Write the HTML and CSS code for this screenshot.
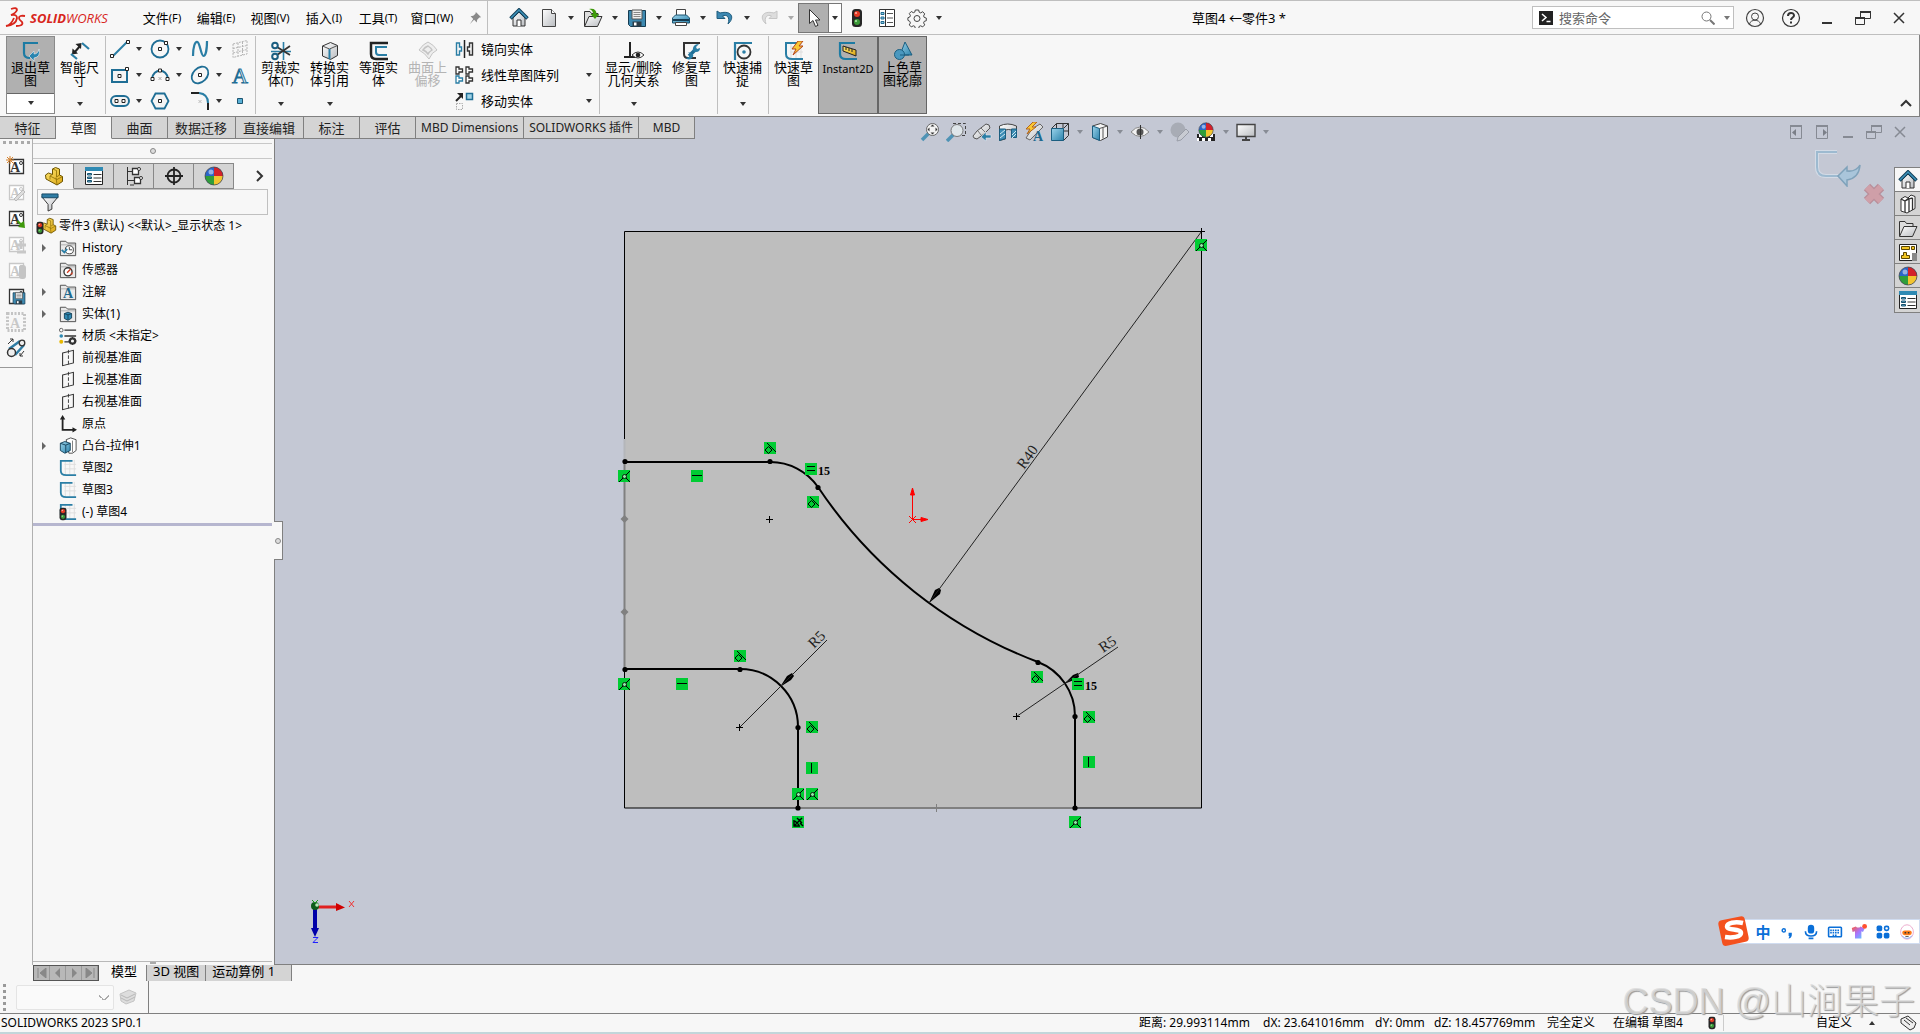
FILE: index.html
```html
<!DOCTYPE html>
<html lang="zh-CN">
<head>
    <meta charset="UTF-8">
    <meta name="viewport" content="width=device-width, initial-scale=1.0">
    <title>草图4 ←零件3 *</title>
    <link rel="stylesheet" href="styles.css">
</head>
<body>

<!-- shared icons -->
<svg class="sprite" width="0" height="0" aria-hidden="true">
    <defs>
        <linearGradient id="steel" x1="0" y1="0" x2="1" y2="1"><stop offset="0" stop-color="#fff"/><stop offset="1" stop-color="#b9bcc0"/></linearGradient>
        <linearGradient id="aqua" x1="0" y1="0" x2="1" y2="1"><stop offset="0" stop-color="#9bd3ea"/><stop offset="1" stop-color="#2c83ac"/></linearGradient>
        <linearGradient id="gold" x1="0" y1="0" x2="1" y2="1"><stop offset="0" stop-color="#ffe873"/><stop offset="1" stop-color="#dba512"/></linearGradient>
        <linearGradient id="shirt" x1="0" y1="0" x2="1" y2="1"><stop offset="0" stop-color="#ff5a3c"/><stop offset=".5" stop-color="#a974ff"/><stop offset="1" stop-color="#4fd4ff"/></linearGradient>
    </defs>
    <symbol id="i-home" viewBox="0 0 20 20">
        <path d="M4 10v8h12v-8l-6-6z" fill="url(#steel)" stroke="#333"/>
        <path d="M8 18v-6h4v6" fill="#fff" stroke="#333"/>
        <path d="M1.500 10.500L10 2l8.500 8.500" fill="none" stroke="#123f58" stroke-width="3.500"/>
        <path d="M2 10L10 2l8 8" fill="none" stroke="#3d93bb" stroke-width="1.500"/>
    </symbol>
    <symbol id="i-new" viewBox="0 0 20 20">
        <path d="M3.500 1.500h9l4 4v13h-13z" fill="url(#steel)" stroke="#444"/><path d="M12.500 1.500v4h4" fill="#fff" stroke="#444"/>
    </symbol>
    <symbol id="i-folder" viewBox="0 0 20 20">
        <path d="M1.500 18V3.500H7l1.500 2H15v3" fill="#ddd" stroke="#333"/><path d="M1.500 18.500l4.500-10h13l-4.500 10z" fill="url(#steel)" stroke="#333"/>
    </symbol>
    <symbol id="i-open" viewBox="0 0 20 20">
        <use href="#i-folder"/><path d="M6 1c5-1 7.500 1 7.500 5H16l-4 5-4.500-5H10C10 3.500 9 2 6 1z" fill="#3f9a0c"/>
    </symbol>
    <symbol id="i-save" viewBox="0 0 20 20">
        <path d="M1.500 2.500h17v16h-15l-2-2z" fill="#3d89b0" stroke="#163c52"/><path d="M5 2h10v9H5z" fill="#f0f0f0" stroke="#555"/><path d="M6.500 4.500h7M6.500 6.500h7M6.500 8.500h7" stroke="#888"/><path d="M5.500 13.500h9v5h-9z" fill="#2c3d48"/><path d="M7 14.500h2.500v3H7z" fill="#fff"/>
    </symbol>
    <symbol id="i-print" viewBox="0 0 20 20">
        <path d="M5.500 8V1.500h9V8" fill="#fff" stroke="#444"/><path d="M1.500 10l3-3h11l3 3v5h-17z" fill="url(#aqua)" stroke="#1b536f"/><path d="M2 12h16" stroke="#163c52" stroke-width="2"/><path d="M4.500 14.500h11v3h-11z" fill="#fff" stroke="#444"/>
    </symbol>
    <symbol id="i-undo" viewBox="0 0 20 20">
        <path d="M2 3v7.500h8L7.500 8c4-2 8 1 5.500 8 7-6 4-14-8-11z" fill="#3c88b2" stroke="#1f5c7d"/>
    </symbol>
    <symbol id="i-redo" viewBox="0 0 20 20">
        <path d="M18 3v7.500h-8L12.500 8C8.500 6 4.500 9 7 16 0 10 3 2 15 5z" fill="#ddd" stroke="#c6c6c6"/>
    </symbol>
    <symbol id="i-cursor" viewBox="0 0 20 20">
        <path d="M5.500 1.500v14l3.500-3 2.500 6 2.500-1.200-2.500-5.300H16z" fill="#fff" stroke="#333"/>
    </symbol>
    <symbol id="i-light" viewBox="0 0 20 20">
        <rect x="5" y="1" width="10" height="18" rx="3.500" fill="#262626"/><circle cx="10" cy="6" r="3" fill="#e53a24"/><circle cx="10" cy="14" r="3" fill="#3b9a38"/><circle cx="9" cy="5" r="1" fill="#ffb5a8"/><circle cx="9" cy="13" r="1" fill="#b8eab0"/>
    </symbol>
    <symbol id="i-list" viewBox="0 0 20 20">
        <path d="M2.500 1.500h15v17h-15z" fill="#fff" stroke="#333"/><path d="M8.500 2v16" stroke="#333"/><path d="M4 4.500h3v2H4zM4 9h3v2H4zM4 13.500h3v2H4z" fill="#8ac4de" stroke="#1f6b91"/><path d="M10 5.500h6M10 10h6M10 14.500h6" stroke="#555"/>
    </symbol>
    <symbol id="i-gear" viewBox="0 0 20 20">
        <path d="M8.300 2h3.400l.5 2.200 1.500.7 2-1.200 2 2.200-1.100 2 .6 1.500 2.100.7v2.600l-2.100.7-.6 1.500 1.100 2-2 2-2-1.100-1.500.6-.5 2.200H8.300l-.5-2.200-1.500-.6-2 1.100-2-2 1.100-2-.6-1.500L.9 12.300V9.700L2.800 9l.6-1.500-1.100-2 2-2 2 1.200 1.500-.6z" fill="none" stroke="#444"/><circle cx="10" cy="10.500" r="3" fill="none" stroke="#444"/>
    </symbol>
    <symbol id="i-pin" viewBox="0 0 16 16"><path d="M9 1l6 6-2 .5-2.500 2.500-.5 3-3-3-5 5 4-6-3-3 3-.5L8.500 3z" fill="#8a8a8a"/></symbol>
    <symbol id="i-user" viewBox="0 0 20 20" fill="none" stroke="#444"><circle cx="10" cy="10" r="8.500" stroke-width="1.200"/><circle cx="10" cy="8.500" r="3.500"/><path d="M4.500 16c1-5 10-5 11 0"/></symbol>
    <symbol id="i-help" viewBox="0 0 20 20" fill="none" stroke="#333"><circle cx="10" cy="10" r="8.500" stroke-width="1.200"/><path d="M7 8c0-4 6-4 6-.5 0 2-3 2-3 4.500M10 13.500v2" stroke-width="2"/></symbol>
    <symbol id="i-min" viewBox="0 0 20 20"><path d="M5 15h10" stroke="currentColor" stroke-width="2"/></symbol>
    <symbol id="i-restore" viewBox="0 0 20 20" fill="none" stroke="currentColor"><path d="M2.500 9.500h9v7h-9zM7.500 9V3.500h10v7H12"/><path d="M2 10h10M7 4h11" stroke-width="2"/></symbol>
    <symbol id="i-close" viewBox="0 0 20 20"><path d="M5 5l10 10M15 5L5 15" stroke="currentColor" stroke-width="1.500"/></symbol>

    <symbol id="i-exit" viewBox="0 0 20 20"><path d="M17 2H3v10q0 5 6 5" fill="none" stroke="#1d7ba3" stroke-width="2.200"/><path d="M8 15l5-5v3q4 0 5-5 2 8-5 9v3z" fill="#2885b0" stroke="#e8eef2" stroke-width=".6"/></symbol>
    <symbol id="i-dim" viewBox="0 0 20 20"><path d="M4 12l6-7" stroke="#222" stroke-width="2"/><path d="M2.500 7.500l-.5 6 6-1zM5.500 3l6-1-.5 6z" fill="#222"/><path d="M1 13l6 5M12 2l7 6" stroke="#2a7ea5" stroke-width="2.200"/></symbol>
    <symbol id="i-line" viewBox="0 0 20 20"><path d="M3 17L17 3" stroke="#2a7ea5" stroke-width="2"/><path d="M.5 15.500h3v3h-3zM16.500 1.500h3v3h-3z" fill="#fff" stroke="#222"/></symbol>
    <symbol id="i-rect" viewBox="0 0 20 20"><path d="M2 5h15v12H2z" fill="#f4f4f4" stroke="#1f6e95" stroke-width="2"/><path d="M8 9.500h3v3H8zM15.500 2.500h3v3h-3z" fill="#fff" stroke="#222"/></symbol>
    <symbol id="i-slot" viewBox="0 0 20 20"><rect x="1" y="5" width="18" height="10" rx="5" fill="#f4f4f4" stroke="#1f6e95" stroke-width="2"/><path d="M5 8.500h3v3H5zM12 8.500h3v3h-3z" fill="#fff" stroke="#222"/></symbol>
    <symbol id="i-circle" viewBox="0 0 20 20"><circle cx="10" cy="10" r="8.500" fill="#f7f7f7" stroke="#1f6e95" stroke-width="1.800"/><path d="M8.500 8.500h3v3h-3zM14.500 2.500h3v3h-3z" fill="#fff" stroke="#222"/></symbol>
    <symbol id="i-arc" viewBox="0 0 20 20"><path d="M2 14C3 3 17 3 18 14" fill="none" stroke="#1f6e95" stroke-width="2"/><path d="M1 12.500h3v3H1zM16 12.500h3v3h-3zM8.500 4h3v3h-3z" fill="#fff" stroke="#222"/><path d="M8.500 12l3 3M11.500 12l-3 3" stroke="#aaa"/></symbol>
    <symbol id="i-poly" viewBox="0 0 20 20"><path d="M5.500 2.500h9l4 7.500-4 7.500h-9L1.500 10z" fill="#f4f4f4" stroke="#1f6e95" stroke-width="1.800"/><path d="M8.500 8.500h3v3h-3z" fill="#fff" stroke="#222"/></symbol>
    <symbol id="i-spline" viewBox="0 0 20 20"><path d="M3 17C3 8 5 2 7.500 3S11 17 13.500 17 17 8 17 2" fill="none" stroke="#2a7ea5" stroke-width="2.200"/></symbol>
    <symbol id="i-ellipse" viewBox="0 0 20 20"><ellipse cx="10" cy="10" rx="9.500" ry="7" transform="rotate(-45 10 10)" fill="#f7f7f7" stroke="#1f6e95" stroke-width="1.800"/><path d="M8.500 8.500h3v3h-3z" fill="#fff" stroke="#222"/></symbol>
    <symbol id="i-fillet" viewBox="0 0 20 20" fill="none"><path d="M1 2h8M18 12v7" stroke="#222" stroke-width="2"/><path d="M9 2q9 1 9 10" stroke="#2a7ea5" stroke-width="2"/><path d="M8.500 9l3 3M11.500 9l-3 3" stroke="#bbb"/></symbol>
    <symbol id="i-plane3" viewBox="0 0 20 20"><path d="M3 5l14-3.500V15L3 18.500zM3 9.500l14-3M3 14l14-3.500M8 4v13M12.500 3v13" fill="none" stroke="#b4b4b4" stroke-dasharray="2 1"/></symbol>
    <symbol id="i-point" viewBox="0 0 20 20"><path d="M7.500 7.500h5v5h-5z" fill="#58b0d6" stroke="#1d5470"/></symbol>
    <symbol id="i-trim" viewBox="0 0 20 20"><path d="M0 10.500h20M12.500 1v18" stroke="#2a7ea5" stroke-width="1.600"/><path d="M6 6l13 8M6 14l13-9" stroke="#333" stroke-width="1.800"/><circle cx="4" cy="4.500" r="2.800" fill="none" stroke="#1b5e80" stroke-width="2"/><circle cx="4" cy="15.500" r="2.800" fill="none" stroke="#1b5e80" stroke-width="2"/></symbol>
    <symbol id="i-cube" viewBox="0 0 20 20"><path d="M2.500 5l8-3.500 7 3v10l-7 4-8-3.500z" fill="url(#steel)" stroke="#333"/><path d="M2.500 5l7 3 8-3.500" fill="none" stroke="#555"/><path d="M9.500 8v10" stroke="#2a7ea5" stroke-width="2"/></symbol>
    <symbol id="i-offset" viewBox="0 0 20 20" fill="none"><path d="M19 2H2v11q0 5 5 5h12" stroke="#222" stroke-width="2.500"/><path d="M18 6H7v5q0 3 3 3h8" stroke="#2a7ea5" stroke-width="2"/></symbol>
    <symbol id="i-surf" viewBox="0 0 20 20"><path d="M1 9Q5 3 10 1q6 3 9 8-5 2-8 9-4-6-10-9z" fill="#eee" stroke="#c4c4c4"/><path d="M5 9q2-3 5-4 3 2 4 4-3 2-4 4-2-3-5-4z" fill="none" stroke="#c4c4c4" stroke-width="1.500"/></symbol>
    <symbol id="i-mirror" viewBox="0 0 20 20" fill="none"><path d="M10.500 1v18" stroke="#222" stroke-width="1.500"/><path d="M2.500 4v12h3v-4h2V8h-2V4z" stroke="#2a7ea5" stroke-width="1.400"/><path d="M18.500 4v12h-3v-4h-2V8h2V4z" stroke="#333" stroke-width="1.400"/></symbol>
    <symbol id="i-pattern" viewBox="0 0 20 20" fill="#fff" stroke="#333" stroke-width="1.300"><path d="M2 2v7h3V7h3.500V4H5V2zM12 2v7h3V7h3.500V4H15V2zM12 11v7h3v-2h3.500v-3H15v-2z"/><path d="M2 11v7h3v-2h3.500v-3H5v-2z" stroke="#2a7ea5"/></symbol>
    <symbol id="i-move" viewBox="0 0 20 20"><path d="M12.500 2.500h6v6h-6z" fill="#9fd2e6" stroke="#1f6e95" stroke-width="1.500"/><path d="M2 10l6-6" stroke="#222" stroke-width="2"/><path d="M3 2h6v6z" fill="#222"/><path d="M2.500 12.500h6v6h-6z" fill="none" stroke="#aaa" stroke-dasharray="1.500 1"/></symbol>
    <symbol id="i-rel" viewBox="0 0 20 20"><path d="M6 1v15M0 16h11" stroke="#222" stroke-width="2"/><path d="M8 14q6-6 12 0-6 6-12 0z" fill="#fff" stroke="#333"/><circle cx="14" cy="14" r="2.300" fill="#222"/></symbol>
    <symbol id="i-repair" viewBox="0 0 20 20"><path d="M18 2H2v11q0 4 4 4h8" fill="none" stroke="#333" stroke-width="2"/><path d="M7 15l7-7" stroke="#1f6e95" stroke-width="3.500"/><path d="M17 3l-3 3 1 2 3-1q0 4-4 4-4 0-3-4t6-4zM6 11l2 2-1 3-3 1q3 3 6 0t-1-5z" fill="#2a7ea5"/></symbol>
    <symbol id="i-snap" viewBox="0 0 20 20" fill="none"><path d="M2 19V2h17" stroke="#2a7ea5" stroke-width="2.200"/><circle cx="11" cy="11" r="6.500" stroke="#333" stroke-width="1.800"/><circle cx="11" cy="11" r="1.800" fill="#2a7ea5"/></symbol>
    <symbol id="i-sketch" viewBox="0 0 20 20" fill="none"><path d="M6 6h13M6 11h13M7 1v16M12 1v16M17 1v16" stroke="#ddd"/><path d="M15 2H2v11q0 5 6 5h11" stroke="#2a7ea5" stroke-width="2"/></symbol>
    <symbol id="i-rapid" viewBox="0 0 20 20"><use href="#i-sketch"/><path d="M14 0L8 8h4l-3 6 10-9h-4l4-5z" fill="#f9c834" stroke="#b5441b"/></symbol>
    <symbol id="i-instant" viewBox="0 0 20 20"><path d="M17 2H2v11q0 5 6 5h11" fill="none" stroke="#1d7ba3" stroke-width="2.200"/><path d="M5 5l13 4v6L5 10z" fill="url(#gold)" stroke="#222"/><path d="M8 6v3M11 7v3M14 8v3" stroke="#222"/></symbol>
    <symbol id="i-shade" viewBox="0 0 20 20"><path d="M12 1l7 13H7z" fill="url(#aqua)" stroke="#1b5e80"/><circle cx="6.500" cy="13.500" r="5" fill="#4a98bf" stroke="#1b5e80"/><path d="M7 14h9" stroke="#1b5e80"/></symbol>

    <symbol id="i-zoomfit" viewBox="0 0 20 20"><path d="M9 11l-7 7" stroke="#4f93b5" stroke-width="3.500"/><circle cx="12.500" cy="7.500" r="6" fill="#f2f2f2" stroke="#666"/><path d="M12.500 2.500l2 2h-4zM12.500 12.500l2-2h-4zM7.500 7.500l2-2v4zM17.500 7.500l-2-2v4z" fill="#333"/></symbol>
    <symbol id="i-zoomarea" viewBox="0 0 20 20"><path d="M7 1.500h12.500v12H15" fill="none" stroke="#444" stroke-dasharray="3 2"/><path d="M8 12l-7 7" stroke="#4f93b5" stroke-width="3.500"/><circle cx="11" cy="8.500" r="6" fill="#dfe6ea" stroke="#777"/></symbol>
    <symbol id="i-prev" viewBox="0 0 20 20"><path d="M1 14l4-5 9-7 3 1 1 3-6 6-7 5-3-1z" fill="url(#steel)" stroke="#555"/><path d="M6 9l3 4M9 6l4 4" stroke="#777"/><path d="M19 13h-5v-3l-5 5 5 4v-3h5z" fill="#2a7ea5" stroke="#e4e8ee" stroke-width=".6"/></symbol>
    <symbol id="i-section" viewBox="0 0 20 20"><path d="M1.500 4q8-4 17 0v11h-5V8q-3-1-6 0v9l-6 1.500z" fill="url(#steel)" stroke="#444"/><path d="M1.500 7h6v9.500l-6 2zM13.500 7h5v8.500h-5z" fill="#3c8cb4" stroke="#1b5e80"/><path d="M2 12l5-4M2 16l5-4M14 13l4-4M14 16l4-4" stroke="#cfe8f2"/></symbol>
    <symbol id="i-anno" viewBox="0 0 20 20"><path d="M2 16l6-9 8-5 3 3-7 7-6 6z" fill="url(#steel)" stroke="#666"/><path d="M9 0L2 7h4l-3 5 9-7H8l5-5z" fill="#f9c834" stroke="#b5651b"/></symbol>
    <symbol id="i-orient" viewBox="0 0 20 20"><path d="M1.500 6.500l5-5h12v12l-5 5M13.500 6.500l5-5M6.500 1.500v5M13 6V2M14 9h4" fill="none" stroke="#333"/><path d="M1.500 6.500h12v12h-12z" fill="url(#aqua)" stroke="#1b5e80"/></symbol>
    <symbol id="i-style" viewBox="0 0 20 20"><path d="M2.500 4l8-2.500 7 2.500v11l-7 3.500-8-3z" fill="#f4f4f4" stroke="#444"/><path d="M2.500 4l7 2.500v12l-7-3z" fill="url(#aqua)" stroke="#1b5e80"/><path d="M9.500 6.500l8-2.500M13 5.500v11" fill="none" stroke="#555"/></symbol>
    <symbol id="i-eye" viewBox="0 0 20 20"><path d="M1 10q9-10 18 0-9 9-18 0z" fill="#f2f2f2" stroke="#888"/><circle cx="10" cy="10" r="3.500" fill="#555"/><path d="M10.500 3v14" stroke="#333"/></symbol>
    <symbol id="i-ball" viewBox="0 0 20 20"><circle cx="10" cy="10" r="9" fill="#2b66c9"/><path d="M10 10V1a9 9 0 019 9z" fill="#d3222a"/><path d="M10 10h9a9 9 0 01-9 9z" fill="#f2c430"/><path d="M10 10v9a9 9 0 01-9-9z" fill="#2f9e3b"/><circle cx="7" cy="6" r="2.500" fill="#fff" opacity=".5"/><circle cx="10" cy="10" r="9" fill="none" stroke="#444" stroke-width=".7"/></symbol>
    <symbol id="i-grayball" viewBox="0 0 20 20"><circle cx="8" cy="8" r="7.500" fill="#a8acb5"/><path d="M8 15l8-8 3 3-8 8-4 1z" fill="#c8cbd2" stroke="#9a9ea8"/></symbol>
    <symbol id="i-scene" viewBox="0 0 20 20"><path d="M1 12h18v7H1z" fill="#222"/><path d="M3 12h3v3H3zM14 12h3v3h-3zM6 16h3v3H6zM12 16h3v3h-3zM1 16h2v3H1z" fill="#fff"/><use href="#i-ball" x="2" y="0" width="16" height="16"/></symbol>
    <symbol id="i-screen" viewBox="0 0 20 20"><path d="M1 2.500h18v12H1z" fill="url(#steel)" stroke="#444" stroke-width="1.400"/><path d="M10 15v3M6 18h8" stroke="#444" stroke-width="2"/></symbol>
    <symbol id="i-paneL" viewBox="0 0 20 20"><path d="M4.500 4v12.500h11V4z" fill="none" stroke="#868a93"/><path d="M4 4h12" stroke="#868a93" stroke-width="2"/><path d="M10 7v7l-4-3.500z" fill="#7b7f88"/></symbol>
    <symbol id="i-paneR" viewBox="0 0 20 20"><path d="M4.500 4v12.500h11V4z" fill="none" stroke="#868a93"/><path d="M4 4h12" stroke="#868a93" stroke-width="2"/><path d="M11 7v7l4-3.500z" fill="#7b7f88"/></symbol>

    <symbol id="i-lib" viewBox="0 0 20 20"><path d="M3 5l4-2.500 3 1.500 3-3 4 1.500v12L9 19l-6-2z" fill="#fff" stroke="#333"/><path d="M7 7v11M11 5v13M14.500 4v12M3 5l4 2 4-3M7 7l5-2.500 2.500-.5" fill="none" stroke="#333" stroke-width="1.300"/></symbol>
    <symbol id="i-palette" viewBox="0 0 20 20"><path d="M1.500 2.500h17v16h-17z" fill="#fff" stroke="#222"/><path d="M3.500 4.500h8v3h-8zM13.500 4.500h3v3h-3zM5.500 10.500h3v3h3v3h-8v-3h2z" fill="#f3c623" stroke="#5d4700"/><path d="M14 11h5v8h-5z" fill="#888"/></symbol>
    <symbol id="i-props" viewBox="0 0 20 20"><path d="M1.500 1.500h17v17h-17z" fill="#fff" stroke="#222"/><path d="M1 1h18v4H1z" fill="#2f8ab3"/><path d="M3.500 7.500h4v1.500h-4zM3.500 11h4v1.500h-4zM3.500 14.500h4V16h-4z" fill="#78bbd8" stroke="#17516e"/><path d="M9.500 8.500h8M9.500 12h8M9.500 15.500h8" stroke="#333"/></symbol>
    <symbol id="i-part" viewBox="0 0 20 20"><path d="M1.500 9l3-2 4 1.500V3l3-1.500 4 1.500v6l3 1.500v5L13 19 2 13z" fill="url(#gold)" stroke="#6b5300"/><path d="M8.500 8.500L6 10v3.500M8.500 3l4 1.500V11l3-2M12 11.500l1 7M6 10l7 3.500 5.500-3" fill="none" stroke="#8d6e05" stroke-width=".8"/></symbol>
    <symbol id="i-config" viewBox="0 0 20 20" fill="#fff" stroke="#333"><path d="M3.500 1v18M3.500 5.500H8M3.500 14.500H10M6 19h4" fill="none"/><path d="M8.500 2.500h6v6h-6zM10.500 11.500h6v6h-6z" stroke-width="1.300"/><circle cx="15" cy="3" r="1.500"/><circle cx="17" cy="12" r="1.500"/></symbol>
    <symbol id="i-target" viewBox="0 0 20 20" fill="none" stroke="#222" stroke-width="1.800"><circle cx="10" cy="10" r="6.500"/><path d="M10 1v18M1 10h18"/></symbol>
    <symbol id="i-funnel" viewBox="0 0 20 20"><path d="M2 4l6.500 8v7l4-2v-5L19 4z" fill="url(#steel)" stroke="#333"/><path d="M2 1h17v4H2z" fill="#2f7da5" stroke="#174a65"/></symbol>
    <symbol id="i-fold" viewBox="0 0 20 20"><path d="M1.500 18.500V2.500h6l2 2h9v14z" fill="#e9e9e9" stroke="#444"/><path d="M2 6.500h16" stroke="#aaa"/></symbol>
    <symbol id="i-history" viewBox="0 0 20 20"><use href="#i-fold"/><circle cx="11.500" cy="12" r="4.500" fill="#fff" stroke="#333"/><path d="M11.500 9v3h3" fill="none" stroke="#333"/><path d="M3 12l3 3 3-4" fill="none" stroke="#2a7ea5" stroke-width="2"/></symbol>
    <symbol id="i-sensor" viewBox="0 0 20 20"><use href="#i-fold"/><circle cx="10" cy="12" r="4.500" fill="#fff" stroke="#333" stroke-width="1.500"/><path d="M9 13l4-4" stroke="#d33b1f" stroke-width="1.500"/><path d="M12 15l3-3v3z" fill="#d33b1f"/></symbol>
    <symbol id="i-body" viewBox="0 0 20 20"><use href="#i-fold"/><path d="M6 9.500L10 8l4 1.500v5L10 17l-4-2z" fill="#2f8ab3" stroke="#123f58"/><path d="M6 9.500l4 1.500 4-1.500M10 11v5.500" fill="none" stroke="#123f58"/></symbol>
    <symbol id="i-material" viewBox="0 0 20 20"><path d="M6 3.500h13M6 10h13M6 16.500h6" stroke="#333" stroke-width="1.600"/><circle cx="2.500" cy="3.500" r="2" fill="#fff" stroke="#555"/><circle cx="2.500" cy="10" r="2" fill="#2f8ab3"/><circle cx="2.500" cy="16.500" r="2.200" fill="#e8b800"/><circle cx="15" cy="15.500" r="3" fill="none" stroke="#333" stroke-width="2.500"/><path d="M15 11v9M10.500 15.500h9" stroke="#333" stroke-dasharray="1.500 6"/></symbol>
    <symbol id="i-plane" viewBox="0 0 20 20"><path d="M4 4.500l12-3v14l-12 3z" fill="none" stroke="#333" stroke-width="1.200"/><path d="M10.500 1v18" stroke="#333" stroke-dasharray="4 2"/></symbol>
    <symbol id="i-origin" viewBox="0 0 20 20"><path d="M4 3v13.500h14" fill="none" stroke="#222" stroke-width="2"/><path d="M4 0l3 5H1zM20 16.500l-5-3v6z" fill="#222"/></symbol>
    <symbol id="i-boss" viewBox="0 0 20 20"><path d="M8 3l5-2 6 2v12l-4 3h-4z" fill="#fff" stroke="#444"/><path d="M15 4v13" stroke="#777"/><path d="M1.500 7l5-2 6 2v8l-6 3-5-3z" fill="url(#aqua)" stroke="#123f58"/><path d="M1.500 7l6 2 5-2M7.500 9v9" fill="none" stroke="#123f58"/></symbol>
    <symbol id="i-frame" viewBox="0 0 20 20"><path d="M3.500 3.500h14v14h-14z" fill="#fff" stroke="currentColor" stroke-width="1.300"/><circle cx="15" cy="7" r="1.500" fill="none" stroke="currentColor"/></symbol>
    <symbol id="i-belt" viewBox="0 0 20 20"><path d="M3 11L14 3M9 17l9-10" stroke="#2f7da5" stroke-width="2.500"/><circle cx="5.500" cy="14.500" r="4" fill="#eee" stroke="#333" stroke-width="1.500"/><circle cx="16" cy="5" r="2.800" fill="#eee" stroke="#333" stroke-width="1.300"/><path d="M2 6l5-5M4 1h3v3M18 13l-4 5M14 15v3h3" fill="none" stroke="#333"/></symbol>
</svg>

<header class="titlebar">
    <div class="logo">
        <svg width="21" height="22" viewBox="0 0 21 22" fill="none" stroke="#d8261c" stroke-width="1.800"><path d="M6 2q6-2 6 1-1 3-6 5 6-1 6 3-1 7-11 8 5-1 8-8"/><path d="M20 9q-6-1-6 2 0 2 3 4 2 4-6 4"/></svg>
        <span class="brand"><b>SOLID</b>WORKS</span>
    </div>
    <nav class="menus">
        <button>文件<small>(F)</small></button>
        <button>编辑<small>(E)</small></button>
        <button>视图<small>(V)</small></button>
        <button>插入<small>(I)</small></button>
        <button>工具<small>(T)</small></button>
        <button>窗口<small>(W)</small></button>
    </nav>
    <button class="pin" aria-label="固定"><svg><use href="#i-pin"/></svg></button>
    <div class="quick">
        <button class="ico" aria-label="主页"><svg><use href="#i-home"/></svg></button>
        <button class="ico" aria-label="新建"><svg><use href="#i-new"/></svg></button><button class="caret" aria-label="新建选项"></button>
        <button class="ico" aria-label="打开"><svg><use href="#i-open"/></svg></button><button class="caret" aria-label="打开选项"></button>
        <button class="ico" aria-label="保存"><svg><use href="#i-save"/></svg></button><button class="caret" aria-label="保存选项"></button>
        <button class="ico" aria-label="打印"><svg><use href="#i-print"/></svg></button><button class="caret" aria-label="打印选项"></button>
        <button class="ico" aria-label="撤消"><svg><use href="#i-undo"/></svg></button><button class="caret" aria-label="撤消选项"></button>
        <button class="ico" aria-label="重做"><svg><use href="#i-redo"/></svg></button><button class="caret dim" aria-label="重做选项"></button>
        <div class="picked">
            <button class="ico" aria-label="选择"><svg><use href="#i-cursor"/></svg></button><button class="caret" aria-label="选择选项"></button>
        </div>
        <button class="ico" aria-label="重建模型"><svg><use href="#i-light"/></svg></button>
        <button class="ico" aria-label="文件属性"><svg><use href="#i-list"/></svg></button>
        <button class="ico" aria-label="选项"><svg><use href="#i-gear"/></svg></button><button class="caret" aria-label="更多选项"></button>
    </div>
    <div class="doc-title">草图4 ←零件3 *</div>
    <div class="search">
        <svg width="14" height="14" viewBox="0 0 14 14"><path d="M0 0h14v14H0z" fill="#222"/><path d="M3 3l4 3.500L3 10M7.500 10.500h4" fill="none" stroke="#fff" stroke-width="1.500"/></svg>
        <input type="text" placeholder="搜索命令" aria-label="搜索命令">
        <svg width="14" height="14" viewBox="0 0 14 14" fill="none" stroke="#777"><circle cx="5.500" cy="5.500" r="4.500"/><path d="M9 9l4.500 4.500" stroke-width="2"/></svg>
        <button class="caret dim2" aria-label="搜索范围"></button>
    </div>
    <div class="window-btns">
        <button aria-label="用户"><svg><use href="#i-user"/></svg></button>
        <button aria-label="帮助"><svg><use href="#i-help"/></svg></button>
        <button aria-label="最小化"><svg><use href="#i-min"/></svg></button>
        <button aria-label="还原"><svg><use href="#i-restore"/></svg></button>
        <button aria-label="关闭"><svg><use href="#i-close"/></svg></button>
    </div>
</header>

<section class="ribbon">
    <div class="cmd split"><button class="face"><svg><use href="#i-exit"/></svg><span>退出草<br>图</span></button><button class="caret" aria-label="退出草图选项"></button></div>
    <div class="cmd"><button class="face"><svg><use href="#i-dim"/></svg><span>智能尺<br>寸</span></button><button class="caret" aria-label="尺寸选项"></button></div>
    <div class="sep"></div>
    <div class="tools">
        <div class="tool"><button aria-label="直线"><svg><use href="#i-line"/></svg></button><button class="caret" aria-label="直线选项"></button></div>
        <div class="tool"><button aria-label="圆"><svg><use href="#i-circle"/></svg></button><button class="caret" aria-label="圆选项"></button></div>
        <div class="tool"><button aria-label="样条曲线"><svg><use href="#i-spline"/></svg></button><button class="caret" aria-label="样条曲线选项"></button></div>
        <div class="tool"><button aria-label="基准面"><svg><use href="#i-plane3"/></svg></button></div>
        <div class="tool"><button aria-label="矩形"><svg><use href="#i-rect"/></svg></button><button class="caret" aria-label="矩形选项"></button></div>
        <div class="tool"><button aria-label="圆弧"><svg><use href="#i-arc"/></svg></button><button class="caret" aria-label="圆弧选项"></button></div>
        <div class="tool"><button aria-label="椭圆"><svg><use href="#i-ellipse"/></svg></button><button class="caret" aria-label="椭圆选项"></button></div>
        <div class="tool"><button aria-label="文字"><svg class="letter big"><text x="10" y="18">A</text></svg></button></div>
        <div class="tool"><button aria-label="槽口"><svg><use href="#i-slot"/></svg></button><button class="caret" aria-label="槽口选项"></button></div>
        <div class="tool"><button aria-label="多边形"><svg><use href="#i-poly"/></svg></button></div>
        <div class="tool"><button aria-label="圆角"><svg><use href="#i-fillet"/></svg></button><button class="caret" aria-label="圆角选项"></button></div>
        <div class="tool"><button aria-label="点"><svg><use href="#i-point"/></svg></button></div>
    </div>
    <div class="sep"></div>
    <div class="cmd"><button class="face"><svg><use href="#i-trim"/></svg><span>剪裁实<br>体<small>(T)</small></span></button><button class="caret" aria-label="剪裁选项"></button></div>
    <div class="cmd"><button class="face"><svg><use href="#i-cube"/></svg><span>转换实<br>体引用</span></button><button class="caret" aria-label="转换选项"></button></div>
    <div class="cmd"><button class="face"><svg><use href="#i-offset"/></svg><span>等距实<br>体</span></button></div>
    <div class="cmd"><button class="face" disabled><svg><use href="#i-surf"/></svg><span>曲面上<br>偏移</span></button></div>
    <div class="rows">
        <div class="row"><button><svg><use href="#i-mirror"/></svg>镜向实体</button></div>
        <div class="row"><button><svg><use href="#i-pattern"/></svg>线性草图阵列</button><button class="caret" aria-label="阵列选项"></button></div>
        <div class="row"><button><svg><use href="#i-move"/></svg>移动实体</button><button class="caret" aria-label="移动选项"></button></div>
    </div>
    <div class="sep"></div>
    <div class="cmd wide"><button class="face"><svg><use href="#i-rel"/></svg><span>显示/删除<br>几何关系</span></button><button class="caret" aria-label="几何关系选项"></button></div>
    <div class="cmd"><button class="face"><svg><use href="#i-repair"/></svg><span>修复草<br>图</span></button></div>
    <div class="sep"></div>
    <div class="cmd"><button class="face"><svg><use href="#i-snap"/></svg><span>快速捕<br>捉</span></button><button class="caret" aria-label="捕捉选项"></button></div>
    <div class="sep"></div>
    <div class="cmd"><button class="face"><svg><use href="#i-rapid"/></svg><span>快速草<br>图</span></button></div>
    <div class="cmd toggle mid"><button class="face en"><svg><use href="#i-instant"/></svg><span>Instant2D</span></button></div>
    <div class="cmd toggle"><button class="face"><svg><use href="#i-shade"/></svg><span>上色草<br>图轮廓</span></button></div>
    <button class="collapse" aria-label="折叠"><svg viewBox="0 0 12 8"><path d="M1 7l5-5 5 5" fill="none" stroke="#333" stroke-width="2"/></svg></button>
</section>

<nav class="tabs">
    <button>特征</button>
    <button class="active">草图</button>
    <button>曲面</button>
    <button class="tight">数据迁移</button>
    <button class="tight">直接编辑</button>
    <button>标注</button>
    <button>评估</button>
    <button class="en">MBD Dimensions</button>
    <button class="en">SOLIDWORKS 插件</button>
    <button class="en">MBD</button>
</nav>

<main class="work">
    <aside class="strip">
        <div class="grip"></div>
        <button aria-label="新建注解视图"><svg class="letter"><use href="#i-frame"/><text x="9" y="16">A</text><path d="M4 0v8M0 4h8M1 1l6 6M7 1L1 7" stroke="#d9822b"/></svg></button>
        <button class="off" aria-label="编辑注解视图"><svg class="letter"><use href="#i-frame"/><text x="9" y="16">A</text><path d="M8 17l9-9 2 2-9 9z" fill="#ddd" stroke="#bbb"/></svg></button>
        <button aria-label="插入"><svg class="letter"><use href="#i-frame"/><text x="9" y="16">A</text><path d="M12 12l3 3 3-2 1 7-7-1 2-2-3-3z" fill="#3f9a0c"/></svg></button>
        <button class="off" aria-label="添加"><svg class="letter"><use href="#i-frame"/><text x="9" y="16">A</text><path d="M15 7v8M11 11h9M11 18h9" stroke="#c8c8c8" stroke-width="3"/></svg></button>
        <button class="off" aria-label="重建"><svg class="letter"><use href="#i-frame"/><text x="9" y="16">A</text><rect x="13" y="5" width="7" height="14" rx="3" fill="#c4c4c4"/></svg></button>
        <button aria-label="保存视图"><svg class="letter"><use href="#i-frame"/><use href="#i-save" x="6" y="5" width="14" height="14"/></svg></button>
        <button class="off" aria-label="图章"><svg class="letter"><path d="M1.500 1.500h17v17h-17z" fill="none" stroke="#c4c4c4" stroke-width="3" stroke-dasharray="2 1.500"/><text x="9" y="16">A</text></svg></button>
        <button aria-label="皮带"><svg><use href="#i-belt"/></svg></button>
    </aside>

    <aside class="panel">
        <div class="panel-top"><i class="knob"></i></div>
        <div class="panel-tabs">
            <button class="active" aria-label="设计树"><svg><use href="#i-part"/></svg></button>
            <button aria-label="属性"><svg><use href="#i-props"/></svg></button>
            <button aria-label="配置"><svg><use href="#i-config"/></svg></button>
            <button aria-label="尺寸专家"><svg><use href="#i-target"/></svg></button>
            <button aria-label="外观"><svg><use href="#i-ball"/></svg></button>
            <button class="more" aria-label="更多"><svg viewBox="0 0 8 12"><path d="M1 1l5 5-5 5" fill="none" stroke="#333" stroke-width="2"/></svg></button>
        </div>
        <label class="filter"><svg><use href="#i-funnel"/></svg><input type="text" aria-label="过滤"></label>
        <ul class="tree">
            <li class="root"><svg><use href="#i-part" x="3" y="0" width="17" height="17"/><use href="#i-light" x="-4" y="4" width="14" height="14"/></svg>零件3 (默认) &lt;&lt;默认&gt;_显示状态 1&gt;</li>
            <li class="sub"><svg><use href="#i-history"/></svg>History</li>
            <li><svg><use href="#i-sensor"/></svg>传感器</li>
            <li class="sub"><svg class="letter blue"><use href="#i-fold"/><text x="9" y="15">A</text></svg>注解</li>
            <li class="sub"><svg><use href="#i-body"/></svg>实体(1)</li>
            <li><svg><use href="#i-material"/></svg>材质 &lt;未指定&gt;</li>
            <li><svg><use href="#i-plane"/></svg>前视基准面</li>
            <li><svg><use href="#i-plane"/></svg>上视基准面</li>
            <li><svg><use href="#i-plane"/></svg>右视基准面</li>
            <li><svg><use href="#i-origin"/></svg>原点</li>
            <li class="sub"><svg><use href="#i-boss"/></svg>凸台-拉伸1</li>
            <li><svg><use href="#i-sketch"/></svg>草图2</li>
            <li><svg><use href="#i-sketch"/></svg>草图3</li>
            <li><svg><use href="#i-sketch"/><use href="#i-light" x="-3" y="4" width="14" height="14"/></svg>(-) 草图4</li>
        </ul>
        <div class="panel-foot"><i class="nub"></i></div>
    </aside>

    <section class="viewport">
        <svg class="scene" width="100%" height="100%">
            <defs>
                <g id="r-tan"><path d="M0 0h12v12H0z" fill="#00cc33"/><path d="M4.500 4.500L8 8l-3.500 3.500L1 8zM3 1l9 9" fill="none" stroke="#000"/></g>
                <g id="r-coin"><path d="M0 0h12v12H0z" fill="#00cc33"/><path d="M1 12l4-4M12 1L8 5M8 8l4 4M4 7h5" stroke="#000"/><circle cx="6.500" cy="6.500" r="2" fill="#8fe7a4" stroke="#000" stroke-width=".8"/></g>
                <g id="r-hor"><path d="M0 0h12v12H0z" fill="#00cc33"/><path d="M1 5.500h10" stroke="#000"/></g>
                <g id="r-ver"><path d="M0 0h12v12H0z" fill="#00cc33"/><path d="M5.500 1v10" stroke="#000"/></g>
                <g id="r-eq"><path d="M0 0h12v12H0z" fill="#00cc33"/><path d="M2 3.500h8M2 7.500h8" stroke="#000"/></g>
                <g id="r-pair"><path d="M0 0h12v12H0z" fill="#00cc33"/><path d="M2 4v6h6M2 10l8-8M5 2l5 5M3 5l4 4M8 7l3 3" fill="none" stroke="#000" stroke-width="1.400"/></g>
            </defs>
            <!-- model space origin sits under the tab bar and left of the tree -->
            <g transform="translate(-275 -139)">
                <path d="M624.500 231.500h577v576.500h-577z" fill="#bebebe" stroke="#000"/>
                <path d="M624.500 439v22" stroke="#b4b6ba" stroke-width="2"/>
                <path d="M624.500 461v208M798 808h277" stroke="#808080" stroke-width="2"/>
                <path d="M936.500 804v8" stroke="#808080"/>
                <path d="M624.500 515l4 4-4 4-4-4zM624.500 608l4 4-4 4-4-4z" fill="#808080"/>
                <g fill="none" stroke="#000" stroke-width="2">
                    <path d="M625 462h145A58 58 0 01818 487A461 461 0 001038 662A58 58 0 011075 716V808"/>
                    <path d="M625 669h115A58 58 0 01798 727V808"/>
                </g>
                <g fill="#000">
                    <circle cx="625" cy="461.500" r="2.600"/><circle cx="770" cy="461.500" r="2.600"/><circle cx="818" cy="487.500" r="2.600"/><circle cx="1038" cy="662.500" r="2.600"/><circle cx="1075" cy="716.500" r="2.600"/><circle cx="1075" cy="808" r="2.600"/>
                    <circle cx="625" cy="669.500" r="2.600"/><circle cx="740" cy="669.500" r="2.600"/><circle cx="798" cy="727.500" r="2.600"/><circle cx="798" cy="808" r="2.600"/>
                    <path d="M929 603l6-13 4-2 2 2-1 4zM780 687l7-11 5-3 2 3-3 4zM1064 684l9-9 5-2 1 4-5 3z"/>
                </g>
                <path d="M1201.500 231.500L929 603M739.500 727.500L827 640M1016.500 716.500L1118 647" stroke="#222"/>
                <path d="M766 519.500h7M769.500 516v7M736 727.500h7M739.500 724v7M1013 716.500h7M1016.500 713v7M1198 231.500h7M1201.500 228v7" stroke="#000"/>
                <g class="dims">
                    <text transform="translate(1024 470) rotate(-54)">R40</text>
                    <text transform="translate(814 649) rotate(-45)">R5</text>
                    <text transform="translate(1103 653) rotate(-34)">R5</text>
                </g>
                <use href="#r-tan" x="764" y="442"/><use href="#r-tan" x="807" y="496"/><use href="#r-tan" x="734" y="650"/><use href="#r-tan" x="806" y="721"/><use href="#r-tan" x="1031" y="671"/><use href="#r-tan" x="1083" y="711"/>
                <use href="#r-coin" x="618" y="470"/><use href="#r-coin" x="618" y="678"/><use href="#r-coin" x="792" y="788"/><use href="#r-coin" x="806" y="788"/><use href="#r-coin" x="1069" y="816"/><use href="#r-coin" x="1195" y="239"/>
                <use href="#r-hor" x="691" y="470"/><use href="#r-hor" x="676" y="678"/><use href="#r-ver" x="806" y="762"/><use href="#r-ver" x="1083" y="756"/>
                <use href="#r-eq" x="805" y="463"/><use href="#r-eq" x="1072" y="678"/><use href="#r-pair" x="792" y="816"/>
                <g class="nums"><text x="818" y="475">15</text><text x="1085" y="690">15</text></g>
                <g stroke="#f00" fill="#f00"><path d="M912.500 519v-28M913 519.500h10M909 516l7 7M916 516l-7 7"/><path d="M912.500 488l2 7h-4zM928 519.500l-7-2v4z"/></g>
                <!-- triad -->
                <path d="M317 907h20" stroke="#e02020" stroke-width="3"/><path d="M345 907.500l-9-4.500v8z" fill="#d00000"/>
                <path d="M315 908v22" stroke="#0000a8" stroke-width="4"/><path d="M315 937l-4-9h8z" fill="#0000a8"/>
                <circle cx="315" cy="906" r="4" fill="#0d5c1a"/><circle cx="317" cy="905" r="1.800" fill="#b8e8b8"/>
                <path d="M312 900l3 3 3-3" fill="none" stroke="#1a9a1a"/>
                <path d="M349 901l5 6M354 901l-5 6" stroke="#f03030"/><path d="M313 937.500h5l-5 5h5" fill="none" stroke="#2020ff"/>
            </g>
        </svg>

        <div class="hud">
            <button aria-label="整屏显示全图"><svg><use href="#i-zoomfit"/></svg></button>
            <button aria-label="局部放大"><svg><use href="#i-zoomarea"/></svg></button>
            <button aria-label="上一视图"><svg><use href="#i-prev"/></svg></button>
            <button aria-label="剖面视图"><svg><use href="#i-section"/></svg></button>
            <button aria-label="动态注解"><svg class="letter blue"><use href="#i-anno"/><text x="14" y="19">A</text></svg></button>
            <button aria-label="视图定向"><svg><use href="#i-orient"/></svg></button><button class="caret" aria-label="定向选项"></button>
            <button aria-label="显示样式"><svg><use href="#i-style"/></svg></button><button class="caret" aria-label="样式选项"></button>
            <button aria-label="隐藏项目"><svg><use href="#i-eye"/></svg></button><button class="caret" aria-label="隐藏选项"></button>
            <button aria-label="编辑外观"><svg><use href="#i-grayball"/></svg></button>
            <button aria-label="应用布景"><svg><use href="#i-scene"/></svg></button><button class="caret" aria-label="布景选项"></button>
            <button aria-label="视图设定"><svg><use href="#i-screen"/></svg></button><button class="caret" aria-label="设定选项"></button>
        </div>

        <div class="doc-btns">
            <button aria-label="左窗格"><svg><use href="#i-paneL"/></svg></button>
            <button aria-label="右窗格"><svg><use href="#i-paneR"/></svg></button>
            <button aria-label="最小化文档"><svg><use href="#i-min"/></svg></button>
            <button aria-label="还原文档"><svg><use href="#i-restore"/></svg></button>
            <button aria-label="关闭文档"><svg><use href="#i-close"/></svg></button>
        </div>

        <div class="confirm">
            <button aria-label="退出草图"><svg width="48" height="38" viewBox="0 0 48 38"><path d="M23 3H3v15q0 9 9 9h12" fill="none" stroke="#d3dbe6" stroke-width="4"/><path d="M23 3H3v15q0 9 9 9h12" fill="none" stroke="#9dbad0" stroke-width="2"/><path d="M24 27l9-9v4q9 1 13-6-1 13-13 15v6z" fill="#a9c5da" stroke="#7fa2ba" stroke-width="1.500"/></svg></button>
            <button class="cancel" aria-label="取消"><svg width="24" height="24" viewBox="0 0 24 24"><path d="M5 5l14 14M19 5L5 19" stroke="#b98f9b" stroke-width="9"/><path d="M5 5l14 14M19 5L5 19" stroke="#cf9fa8" stroke-width="6.500"/></svg></button>
        </div>

        <nav class="taskpane">
            <button class="active" aria-label="资源"><svg><use href="#i-home"/></svg></button>
            <button aria-label="设计库"><svg><use href="#i-lib"/></svg></button>
            <button aria-label="文件探索器"><svg><use href="#i-folder"/></svg></button>
            <button aria-label="视图调色板"><svg><use href="#i-palette"/></svg></button>
            <button aria-label="外观布景"><svg><use href="#i-ball"/></svg></button>
            <button aria-label="自定义属性"><svg><use href="#i-props"/></svg></button>
        </nav>

        <button class="splitter" aria-label="收起设计树"><i class="knob"></i></button>

        <div class="ime">
            <svg class="ime-logo" width="34" height="32" viewBox="0 0 34 32"><rect x="3" y="3" width="27" height="26" rx="4" transform="rotate(-12 17 16)" fill="#f4511e"/><path d="M26 8c-8-2-16 0-16 3.500 0 4 14 2 14 6.500 0 4-9 5-16 4" fill="none" stroke="#fff" stroke-width="4.500"/></svg>
            <button>中</button>
            <button aria-label="标点"><svg viewBox="0 0 20 20"><circle cx="6" cy="8" r="2" fill="none" stroke="#0a6fd8" stroke-width="1.800"/><path d="M12 11h4v3q-1 4-4 4l1-3h-1z" fill="#0a6fd8"/></svg></button>
            <button aria-label="语音"><svg viewBox="0 0 20 20"><rect x="6" y="1" width="8" height="11" rx="4" fill="#0a6fd8"/><path d="M3 9q0 6 7 6t7-6M7 18h6" fill="none" stroke="#0a6fd8" stroke-width="2"/></svg></button>
            <button aria-label="键盘"><svg viewBox="0 0 20 20"><rect x="2" y="4" width="16" height="12" rx="1" fill="none" stroke="#0a6fd8" stroke-width="2"/><path d="M4 8h12M4 11h12M7 14h6" stroke="#0a6fd8" stroke-width="2" stroke-dasharray="2 1"/></svg></button>
            <button aria-label="皮肤"><svg viewBox="0 0 20 20"><path d="M1 5l5-2q3 3 6 0l5 3-2 4-2-1v9H5V9L2 10z" fill="url(#shirt)"/><circle cx="17" cy="3" r="3" fill="#ff5030"/></svg></button>
            <button aria-label="工具箱"><svg viewBox="0 0 20 20" fill="#0a6fd8"><rect x="2" y="2" width="7" height="7" rx="2"/><rect x="2" y="11" width="7" height="7" rx="2"/><rect x="11" y="11" width="7" height="7" rx="2"/><rect x="12" y="3" width="5" height="5" rx="2" fill="none" stroke="#0a6fd8" stroke-width="2"/></svg></button>
            <button aria-label="助手"><svg viewBox="0 0 20 20"><ellipse cx="10" cy="10" rx="8" ry="9" fill="#fff" stroke="#e99ac4"/><path d="M4 15q6 6 12 0" fill="none" stroke="#6d9cf5"/><rect x="4" y="8" width="12" height="6" rx="3" fill="#ff7a1a"/><path d="M7 10h2v2H7zM11 10h2v2h-2zM8 15h4v1H8z" fill="#333"/></svg></button>
        </div>
    </section>
</main>

<nav class="sheets">
    <div class="sheet-nav">
        <button aria-label="首页"><svg viewBox="0 0 10 10"><path d="M1 0v10M9 0v10L3 5z" fill="#888" stroke="#888"/></svg></button>
        <button aria-label="上一页"><svg viewBox="0 0 10 10"><path d="M7 0v10L2 5z" fill="#888"/></svg></button>
        <button aria-label="下一页"><svg viewBox="0 0 10 10"><path d="M3 0v10l5-5z" fill="#888"/></svg></button>
        <button aria-label="末页"><svg viewBox="0 0 10 10"><path d="M9 0v10M1 0v10l6-5z" fill="#888" stroke="#888"/></svg></button>
    </div>
    <button class="sheet active">模型</button>
    <button class="sheet">3D 视图</button>
    <button class="sheet last">运动算例 1</button>
</nav>

<div class="layerbar">
    <div class="vgrip"></div>
    <select aria-label="图层" disabled><option></option></select>
    <button aria-label="图层属性"><svg viewBox="0 0 18 16"><path d="M1 5l9-4 7 3-2 8-8 3-5-3z" fill="#ddd" stroke="#c4c4c4"/><path d="M2 6l6 3 8-4M2 9l6 3 8-4" fill="none" stroke="#b8b8b8"/></svg></button>
</div>

<footer class="status">
    <span class="version">SOLIDWORKS 2023 SP0.1</span>
    <span class="dist">距离: 29.993114mm</span>
    <span class="dx">dX: 23.641016mm</span>
    <span class="dy">dY: 0mm</span>
    <span class="dz">dZ: 18.457769mm</span>
    <span class="defined">完全定义</span>
    <span class="editing">在编辑 草图4</span>
    <svg class="lamp" width="14" height="14"><use href="#i-light"/></svg>
    <button class="custom">自定义 <i></i></button>
    <button class="tag" aria-label="标签"><svg viewBox="0 0 18 16"><path d="M2 4l7-3 8 7-2 5-4 2-9-7z" fill="#eee" stroke="#333"/><path d="M5 5l6 5M7 3l7 5" stroke="#333"/></svg></button>
</footer>

<div class="watermark">CSDN @山涧果子</div>

</body>
</html>
```

FILE: styles.css
```css
* {
    box-sizing: border-box;
}
body {
    margin: 0;
    height: 100vh;
    display: flex;
    flex-direction: column;
    overflow: hidden;
    background-color: #f7f7f7;
    color: #000;
    font-family: "Noto Sans", "Noto Sans CJK SC", sans-serif;
    font-size: 13px;
    line-height: 16px;
}
button, input, select {
    font: inherit;
    color: inherit;
}
button {
    margin: 0;
    padding: 0;
    border: none;
    background: none;
    display: flex;
    align-items: center;
    justify-content: center;
}
button > svg {
    width: 20px;
    height: 20px;
    flex: none;
}
small {
    font-size: 11px;
}
.sprite {
    position: absolute;
}
.letter text {
    font-family: "Liberation Serif", serif;
    font-size: 14px;
    font-weight: bold;
    text-anchor: middle;
    fill: currentColor;
}
.letter.blue text {
    fill: #20688d;
}
.letter.big text {
    font-size: 22px;
    font-weight: normal;
    fill: #e8f3f8;
    stroke: #1f6e95;
}
.caret {
    width: 14px;
    align-self: stretch;
}
.caret::before {
    content: "";
    border: 3px solid transparent;
    border-top: 4px solid #333;
    border-bottom: none;
}
.caret.dim::before {
    border-top-color: #aaa;
}
.caret.dim2::before {
    border-top-color: #777;
}

/* title bar */
.titlebar {
    flex: none;
    height: 35px;
    display: flex;
    align-items: center;
    border-top: 1px solid #bfbfbf;
    border-bottom: 1px solid #bfbfbf;
}
.logo {
    width: 135px;
    padding-left: 5px;
    display: flex;
    align-items: center;
    gap: 4px;
    color: #d8261c;
}
.brand {
    font-family: "Open Sans", sans-serif;
    font-style: italic;
    font-size: 13px;
}
.menus {
    display: flex;
}
.menus button {
    width: 54px;
    white-space: nowrap;
}
.pin {
    margin-left: 4px;
    width: 24px;
    height: 33px;
}
.pin svg {
    width: 14px;
    height: 14px;
}
.quick {
    display: flex;
    height: 33px;
    padding-left: 16px;
    border-left: 1px solid #bfbfbf;
    align-items: center;
}
.ico {
    width: 30px;
    height: 29px;
}
.picked {
    display: flex;
    height: 30px;
    border: 1px solid #777;
    background-color: #fff;
}
.picked .ico {
    width: 29px;
    height: 28px;
    background-color: #b0b0b0;
}
.picked .caret {
    width: 13px;
    border-left: 1px solid #777;
}
.doc-title {
    flex: 1;
    text-align: center;
}
.search {
    width: 202px;
    height: 23px;
    margin-right: 3px;
    padding-left: 6px;
    display: flex;
    align-items: center;
    gap: 6px;
    background-color: #fff;
    border: 1px solid #bfbfbf;
}
.search input {
    flex: 1;
    min-width: 0;
    padding: 0;
    border: none;
    outline: none;
}
.search input::placeholder {
    color: #666;
    opacity: 1;
}
.search .caret {
    width: 12px;
}
.window-btns {
    display: flex;
    margin-right: 3px;
    color: #333;
}
.window-btns button {
    width: 36px;
    height: 33px;
}

/* ribbon */
.ribbon {
    flex: none;
    height: 82px;
    padding: 1px 0 2px 6px;
    display: flex;
    border-right: 1px solid #808080;
    border-bottom: 1px solid #808080;
}
.cmd {
    width: 49px;
    height: 78px;
    display: flex;
    flex-direction: column;
}
.cmd.wide {
    width: 67px;
}
.cmd.mid {
    width: 60px;
}
.face {
    height: 58px;
    padding-top: 5px;
    flex-direction: column;
    justify-content: flex-start;
    line-height: 13px;
    white-space: nowrap;
}
.face:disabled {
    color: #b4b4b4;
}
.cmd .caret {
    width: auto;
    height: 20px;
}
.split {
    border: 1px solid #8a8a8a;
    background-color: #fff;
}
.split .face {
    background-color: #b0b0b0;
    border-bottom: 1px solid #666;
    padding-top: 4px;
}
.toggle .face {
    height: 78px;
    padding-top: 4px;
    background-color: #b0b0b0;
    border: 1px solid #666;
}
.face.en {
    font-size: 11px;
    line-height: 15px;
}
.sep {
    width: 1px;
    margin-left: 1px;
    background-color: #bfbfbf;
}
.tools {
    display: grid;
    grid-template-columns: 40px 40px 40px 20px;
    grid-auto-rows: 26px;
    padding: 0 4px;
}
.tool {
    display: flex;
    align-items: center;
}
.tool .caret {
    width: 18px;
}
.rows {
    width: 146px;
    padding-left: 2px;
}
.row {
    height: 26px;
    display: flex;
    align-items: center;
    justify-content: space-between;
}
.row button {
    gap: 7px;
}
.row .caret {
    width: 18px;
}
.collapse {
    margin-left: auto;
    align-self: flex-end;
    width: 26px;
    height: 22px;
}
.collapse svg {
    width: 12px;
    height: 8px;
}

/* command tabs */
.tabs {
    flex: none;
    height: 22px;
    display: flex;
    background-color: #c4c8d4;
}
.tabs button {
    padding: 0 14px;
    color: #222;
    background-color: #d4d4d4;
    border-right: 1px solid #808080;
    border-bottom: 1px solid #808080;
    min-width: 56px;
    white-space: nowrap;
}
.tabs .tight {
    padding: 0 8px 0 7px;
}
.tabs .active {
    background-color: #f7f7f7;
    border-bottom-color: #f7f7f7;
}
.tabs .en {
    padding: 0 5px;
    font-size: 12px;
}

.work {
    flex: 1;
    min-height: 0;
    display: flex;
}

/* left icon strip */
.strip {
    width: 32px;
    display: flex;
    flex-direction: column;
    align-items: center;
    align-self: flex-start;
    border-bottom: 1px solid #999;
    padding-bottom: 6px;
}
.grip {
    width: 27px;
    height: 3px;
    margin: 2px 0 9px;
    border-top: 3px dotted #aaa;
}
.strip button {
    width: 32px;
    height: 26px;
    color: #333;
}
.strip .off {
    color: #c8c8c8;
}

/* feature tree */
.panel {
    width: 243px;
    display: flex;
    flex-direction: column;
    border-left: 1px solid #b0b0b0;
    border-right: 1px solid #808080;
    font-size: 12px;
}
.knob {
    width: 6px;
    height: 6px;
    border: 1px solid #888;
    border-radius: 50%;
    background-color: #ddd;
}
.panel-top {
    height: 16px;
    margin: 4px 2px 4px 0;
    display: flex;
    align-items: center;
    justify-content: center;
    border-top: 1px solid #c8c8c8;
    border-bottom: 1px solid #c8c8c8;
}
.panel-tabs {
    height: 26px;
    display: flex;
    padding-left: 1px;
}
.panel-tabs button {
    width: 40px;
    background-color: #d4d4d4;
    border: 1px solid #888;
    border-left: none;
}
.panel-tabs .active {
    background: none;
    border-bottom-color: #f7f7f7;
}
.panel-tabs .more {
    width: 24px;
    background: none;
    border: none;
    margin-left: 14px;
}
.panel-tabs .more svg {
    width: 8px;
    height: 12px;
}
.filter {
    height: 26px;
    margin: 0 6px 0 4px;
    padding: 0 2px;
    display: flex;
    align-items: center;
    border: 1px solid #c0c0c0;
}
.filter svg {
    width: 19px;
    height: 19px;
    flex: none;
}
.filter input {
    flex: 1;
    min-width: 0;
    border: none;
    outline: none;
    background: none;
}
.tree {
    margin: 0 2px 0 0;
    padding: 0;
    list-style: none;
    border-bottom: 3px solid #b6b6cf;
}
.tree li {
    height: 22px;
    padding-left: 26px;
    display: flex;
    align-items: center;
    gap: 5px;
    white-space: nowrap;
}
.tree li > svg {
    width: 18px;
    height: 18px;
    flex: none;
    overflow: visible;
}
.tree .root {
    padding-left: 4px;
    gap: 4px;
}
.tree .sub {
    padding-left: 9px;
}
.tree .sub::before {
    content: "";
    margin-right: 8px;
    border: 4px solid transparent;
    border-left: 4px solid #666;
    border-right: none;
}
.panel-foot {
    margin: auto 2px 2px 0;
    height: 2px;
    border-top: 1px solid #b8b8b8;
}
.nub {
    display: block;
    width: 6px;
    height: 2px;
    margin: 0 auto;
    background-color: #aaa;
}

/* graphics area */
.viewport {
    flex: 1;
    min-width: 0;
    position: relative;
    background-color: #c4c8d4;
    border-bottom: 1px solid #808080;
}
.scene {
    display: block;
}
.dims text {
    font-family: "Liberation Serif", serif;
    font-size: 15px;
    fill: #222;
}
.nums text {
    font-family: "Liberation Serif", serif;
    font-weight: bold;
    font-size: 12px;
}
.hud {
    position: absolute;
    top: -20px;
    left: 0;
    right: 6px;
    display: flex;
    justify-content: center;
}
.hud button {
    width: 26px;
    height: 26px;
}
.hud .caret {
    width: 14px;
}
.hud .caret::before {
    border-top-color: #888c95;
}
.doc-btns {
    position: absolute;
    top: -20px;
    right: 7px;
    display: flex;
    color: #868a93;
}
.doc-btns button {
    width: 26px;
    height: 26px;
}
.confirm {
    position: absolute;
    top: 10px;
    right: 34px;
    height: 57px;
    display: flex;
    align-items: flex-start;
}
.confirm svg {
    width: auto;
    height: auto;
}
.confirm .cancel {
    align-self: flex-end;
}
.taskpane {
    position: absolute;
    top: 28px;
    right: 0;
    width: 26px;
    border: 1px solid #808080;
    border-right: none;
}
.taskpane button {
    width: 25px;
    height: 24px;
    background-color: #d4d4d4;
    border-bottom: 1px solid #808080;
}
.taskpane button:last-child {
    border-bottom: none;
}
.taskpane .active {
    background-color: #f7f7f7;
}
.splitter {
    position: absolute;
    top: 382px;
    left: -1px;
    width: 9px;
    height: 39px;
    background-color: #f7f7f7;
    border: 1px solid #808080;
    border-left: none;
}
.ime {
    position: absolute;
    right: 0;
    bottom: 20px;
    height: 25px;
    padding-left: 16px;
    display: flex;
    align-items: center;
    background-color: #fff;
    border: 1px solid #d0dcf0;
}
.ime button {
    width: 24px;
    color: #0a6fd8;
    font-size: 15px;
    font-weight: bold;
}
.ime button svg {
    width: 16px;
    height: 16px;
}
.ime-logo {
    position: absolute;
    left: -18px;
    bottom: -4px;
}

/* sheet tabs */
.sheets {
    flex: none;
    height: 16px;
    padding-left: 33px;
    display: flex;
}
.sheet-nav {
    display: flex;
    border: 1px solid #555;
}
.sheet-nav button {
    width: 16px;
    background-color: #b8b8b8;
    border-right: 1px solid #999;
}
.sheet-nav svg {
    width: 10px;
    height: 10px;
}
.sheet {
    padding: 0 6px;
    align-items: flex-start;
    line-height: 12px;
    background-color: #d4d4d4;
    border-right: 1px solid #808080;
    white-space: nowrap;
}
.sheet.active {
    padding: 0 9px 0 12px;
    background: none;
}
.sheet.last {
    padding-right: 16px;
}

/* layer toolbar */
.layerbar {
    flex: none;
    height: 33px;
    display: flex;
    align-items: center;
    border-bottom: 1px solid #808080;
}
.vgrip {
    width: 3px;
    height: 27px;
    margin: 0 10px 0 3px;
    border-left: 3px dotted #999;
}
.layerbar select {
    width: 98px;
    height: 25px;
    appearance: none;
    border: 1px solid #e4e4e4;
    border-radius: 2px;
    opacity: 1;
    background: linear-gradient(-135deg, transparent 45%, #aaa 45%, #aaa 60%, transparent 60%) right 9px center / 5px 5px no-repeat, linear-gradient(135deg, transparent 45%, #aaa 45%, #aaa 60%, transparent 60%) right 4px center / 5px 5px no-repeat, #fafafa;
}
.layerbar button {
    width: 35px;
    height: 32px;
    padding-left: 5px;
    justify-content: flex-start;
    border-right: 1px solid #808080;
}
.layerbar button svg {
    width: 18px;
    height: 16px;
}

/* status bar */
.status {
    flex: none;
    height: 20px;
    padding: 0 3px 0 1px;
    display: flex;
    align-items: center;
    font-size: 12px;
    border-bottom: 2px solid #c2d6da;
    white-space: nowrap;
}
.version {
    margin-right: auto;
}
.dist {
    width: 124px;
}
.dx {
    width: 112px;
}
.dy {
    width: 59px;
}
.dz {
    width: 113px;
}
.defined {
    width: 66px;
}
.editing {
    width: 92px;
}
.lamp {
    margin-right: 4px;
}
.custom {
    width: 176px;
    justify-content: flex-end;
    gap: 17px;
    padding-right: 24px;
    border-left: 1px solid #ccc;
}
.custom i {
    border: 3px solid transparent;
    border-bottom: 4px solid #333;
    border-top: none;
}
.tag svg {
    width: 18px;
    height: 16px;
}
.watermark {
    position: absolute;
    right: 5px;
    bottom: 8px;
    font-family: "Liberation Sans", "Noto Sans CJK SC", sans-serif;
    font-size: 36px;
    font-weight: 300;
    line-height: 48px;
    color: rgba(220, 220, 220, 0.8);
    text-shadow: 1px 1px 1px #999;
    pointer-events: none;
}
```
